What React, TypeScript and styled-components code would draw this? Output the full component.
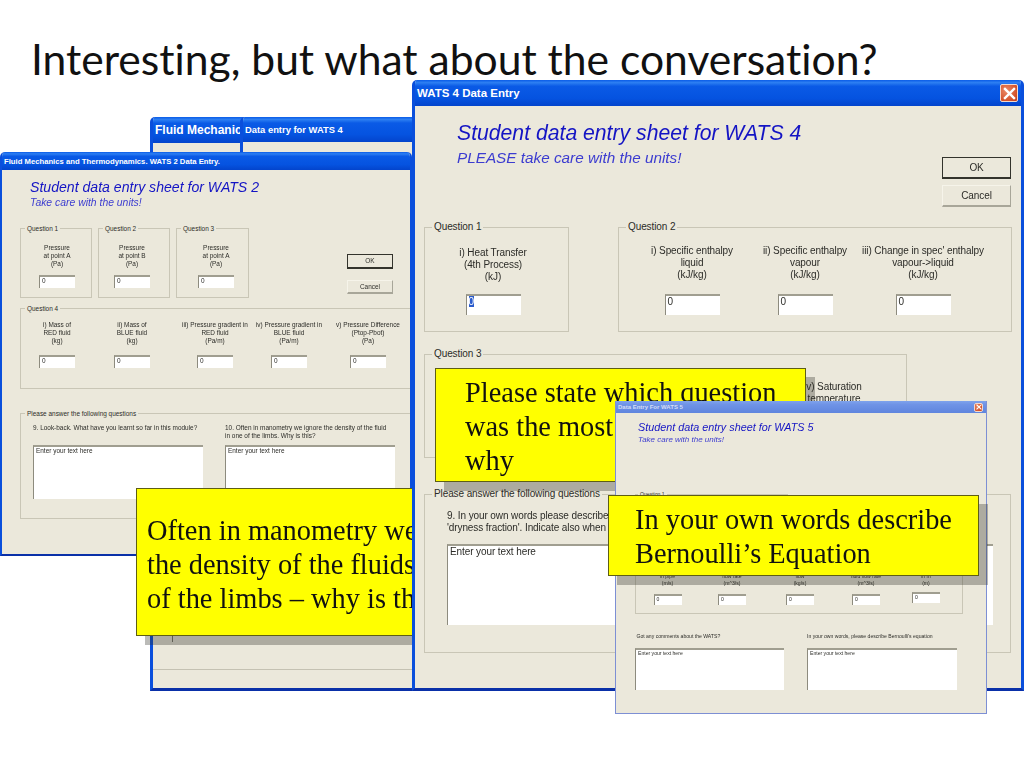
import React from 'react';
import styled, { createGlobalStyle } from 'styled-components';

const Global = createGlobalStyle`
    html, body {
        margin: 0;
        padding: 0;
        background: #fff;
    }
`;

const Slide = styled.div`
    position: relative;
    width: 1024px;
    height: 768px;
    overflow: hidden;
    background: #fff;
    font-family: 'Liberation Sans', Arial, sans-serif;
`;

const SlideTitle = styled.h1`
    margin: 0;
    padding: 35px 0 0 31px;
    font: 400 42.6px/48px Lato, 'Noto Sans', sans-serif;
    font-variant-ligatures: none;
    color: #111;
`;

const Window = styled.div<{ $x: number; $y: number; $w: number; $h: number; $edge?: number; $faded?: boolean }>`
    position: absolute;
    left: ${({ $x }) => $x}px;
    top: ${({ $y }) => $y}px;
    width: ${({ $w }) => $w}px;
    height: ${({ $h }) => $h}px;
    box-sizing: border-box;
    display: flex;
    flex-direction: column;
    overflow: hidden;
    background: #ebe8db;
    color: #2c2c28;
    border: ${({ $edge = 3 }) => $edge}px solid ${({ $faded }) => ($faded ? '#7d8fd4' : '#0a4fdc')};
    border-top: 0;
    border-bottom-color: ${({ $faded }) => ($faded ? '#7d8fd4' : '#0a30a8')};
    border-radius: ${({ $faded }) => ($faded ? '0' : '5px 5px 0 0')};
`;

const TitleBar = styled.div<{ $height: number; $size: number; $faded?: boolean }>`
    flex: none;
    display: flex;
    align-items: center;
    justify-content: space-between;
    height: ${({ $height }) => $height}px;
    margin: 0 -3px;
    padding: 0 6px 0 5px;
    background: ${({ $faded }) =>
        $faded
            ? 'linear-gradient(to bottom, #7fa3ec, #6f93e6 30%, #5f85de)'
            : 'linear-gradient(to bottom, #0a5ce8 0, #2d7ff2 10%, #0a5ae6 24%, #0553e0 70%, #0344cc 100%)'};
    color: ${({ $faded }) => ($faded ? '#d5def5' : '#fff')};
    font-size: ${({ $size }) => $size}px;
    font-weight: 700;
    white-space: nowrap;
`;

const CloseBox = styled.span<{ $size: number }>`
    flex: none;
    display: flex;
    align-items: center;
    justify-content: center;
    width: ${({ $size }) => $size}px;
    height: ${({ $size }) => $size}px;
    box-sizing: border-box;
    border: 1px solid #f2d8cc;
    border-radius: 2px;
    background: radial-gradient(circle at 35% 35%, #ea8a68, #d4522a 70%, #c04020);
`;

const Form = styled.div<{ $size: number; $line: number; $track?: number }>`
    flex: 1;
    display: flex;
    flex-direction: column;
    min-height: 0;
    font-size: ${({ $size }) => $size}px;
    line-height: ${({ $line }) => $line}px;
    letter-spacing: ${({ $track = 0 }) => $track}px;
    filter: blur(0.3px);
`;

const Head = styled.div<{ $height: number; $left: number; $top: number }>`
    flex: none;
    display: flex;
    justify-content: space-between;
    height: ${({ $height }) => $height}px;
    box-sizing: border-box;
    padding: ${({ $top }) => $top}px 0 0 ${({ $left }) => $left}px;
`;

const Heading = styled.div<{ $size: number; $line: number }>`
    font-size: ${({ $size }) => $size}px;
    line-height: ${({ $line }) => $line}px;
    font-style: italic;
    letter-spacing: 0;
    color: #1414c4;
    white-space: nowrap;
`;

const SubHeading = styled(Heading)`
    color: #3c3cd0;
`;

const Buttons = styled.div<{ $top: number; $gap: number; $right: number }>`
    flex: none;
    display: flex;
    flex-direction: column;
    gap: ${({ $gap }) => $gap}px;
    margin: ${({ $top }) => $top}px ${({ $right }) => $right}px 0 auto;
`;

const Button = styled.div<{ $w: number; $h: number; $main?: boolean }>`
    display: flex;
    align-items: center;
    justify-content: center;
    width: ${({ $w }) => $w}px;
    height: ${({ $h }) => $h}px;
    box-sizing: border-box;
    border: 1px solid ${({ $main }) => ($main ? '#33332c' : '#f6f4ea')};
    border-right-color: ${({ $main }) => ($main ? '#33332c' : '#a8a699')};
    border-bottom: 2px solid ${({ $main }) => ($main ? '#33332c' : '#a8a699')};
`;

const GroupRow = styled.div<{ $left: number; $gap?: number; $top?: number }>`
    flex: none;
    display: flex;
    align-items: flex-start;
    gap: ${({ $gap = 0 }) => $gap}px;
    margin: ${({ $top = 0 }) => $top}px 0 0 ${({ $left }) => $left}px;
`;

const Group = styled.div<{ $w: number; $h: number; $top: number; $left?: number; $cols?: string }>`
    position: relative;
    flex: none;
    display: grid;
    align-content: start;
    grid-template-columns: ${({ $cols = '1fr' }) => $cols};
    width: ${({ $w }) => $w}px;
    height: ${({ $h }) => $h}px;
    box-sizing: border-box;
    padding: ${({ $top }) => $top}px 0 0 ${({ $left = 0 }) => $left}px;
    border: 1px solid #c9c6b6;
`;

const Legend = styled.span<{ $left: number }>`
    position: absolute;
    left: ${({ $left }) => $left}px;
    top: 0;
    transform: translateY(-55%);
    padding: 0 2px;
    background: #ebe8db;
    white-space: nowrap;
`;

const Field = styled.div<{ $gap: number }>`
    display: flex;
    flex-direction: column;
    align-items: center;
    gap: ${({ $gap }) => $gap}px;
    min-width: 0;
    text-align: center;
    white-space: nowrap;
`;

const Entry = styled.div<{ $w: number; $h: number; $up?: number }>`
    width: ${({ $w }) => $w}px;
    height: ${({ $h }) => $h}px;
    box-sizing: border-box;
    margin-top: ${({ $up = 0 }) => -$up}px;
    padding: 0 0 0 2px;
    background: #fff;
    border-top: 2px solid #a09e90;
    border-left: 1px solid #8d8b7e;
    text-align: left;
    white-space: nowrap;
    overflow: hidden;
`;

const Picked = styled.span`
    background: #2b5ccc;
    color: #fff;
`;

const Question = styled.div<{ $gap: number }>`
    display: flex;
    flex-direction: column;
    gap: ${({ $gap }) => $gap}px;
    white-space: nowrap;
`;

const Rule = styled.div`
    flex: none;
    margin: auto -3px 18px;
    border-top: 1px solid #c4c1b2;
`;

const Tick = styled.div`
    flex: none;
    width: 1px;
    height: 8px;
    margin: 0 0 27px 19px;
    background: #77756a;
`;

const Spacer = styled.div`
    flex: 1;
`;

const Note = styled.div<{ $x: number; $y: number; $w: number; $h: number; $left: number; $top: number }>`
    position: absolute;
    left: ${({ $x }) => $x}px;
    top: ${({ $y }) => $y}px;
    width: ${({ $w }) => $w}px;
    height: ${({ $h }) => $h}px;
    box-sizing: border-box;
    padding: ${({ $top }) => $top}px 0 0 ${({ $left }) => $left}px;
    background: #ffff00;
    border: 1.5px solid #5e5e14;
    box-shadow: 9px 9px 0 rgba(50, 48, 40, 0.33);
    color: #111;
    font: 28.4px/34px 'Liberation Serif', 'Times New Roman', serif;
    white-space: nowrap;
`;

const CrossIcon = ({ size }: { size: number }) => (
    <svg width={size} height={size} viewBox="0 0 10 10">
        <path d="M1.5 1.5 L8.5 8.5 M8.5 1.5 L1.5 8.5" stroke="#fff" strokeWidth="1.8" strokeLinecap="square" />
    </svg>
);

const Lines = ({ lines }: { lines: string[] }) => (
    <div>
        {lines.map((line) => (
            <div key={line}>{line}</div>
        ))}
    </div>
);

const wats2Tops = [
    ['Pressure', 'at point A', '(Pa)'],
    ['Pressure', 'at point B', '(Pa)'],
    ['Pressure', 'at point A', '(Pa)'],
];

const wats2Fluid = [
    ['i) Mass of', 'RED fluid', '(kg)'],
    ['ii) Mass of', 'BLUE fluid', '(kg)'],
    ['iii) Pressure gradient in', 'RED fluid', '(Pa/m)'],
    ['iv) Pressure gradient in', 'BLUE fluid', '(Pa/m)'],
    ['v) Pressure Difference', '(Ptop-Pbot)', '(Pa)'],
];

const wats4Enthalpy = [
    ['i) Specific enthalpy', 'liquid', '(kJ/kg)'],
    ['ii) Specific enthalpy', 'vapour', '(kJ/kg)'],
    ["iii) Change in spec' enthalpy", 'vapour->liquid', '(kJ/kg)'],
];

const wats5Flow = [
    ['i) Velocity', 'in pipe', '(m/s)'],
    ['ii) Volume', 'flow rate', '(m^3/s)'],
    ['iii) Mass', 'flow', '(kg/s)'],
    ['iv) Volume', 'fluid flow rate', '(m^3/s)'],
    ['v) Head', 'in m', '(m)'],
];

const Wats2Window = () => (
    <Window $x={0} $y={152} $w={412} $h={404} $edge={2}>
        <TitleBar $height={18} $size={7.7}>
            Fluid Mechanics and Thermodynamics. WATS 2 Data Entry.
        </TitleBar>
        <Form $size={6.45} $line={8}>
            <Head $height={58} $left={28} $top={9}>
                <div>
                    <Heading $size={14.1} $line={16}>
                        Student data entry sheet for WATS 2
                    </Heading>
                    <SubHeading $size={10.4} $line={16}>
                        Take care with the units!
                    </SubHeading>
                </div>
            </Head>
            <GroupRow $left={18} $gap={6}>
                {wats2Tops.map((lines, i) => (
                    <Group key={i} $w={i === 2 ? 73 : 72} $h={70} $top={15} $cols={['72px', '66px', '78px'][i]}>
                        <Legend $left={4}>Question {i + 1}</Legend>
                        <Field $gap={7}>
                            <Lines lines={lines} />
                            <Entry $w={36} $h={13}>
                                0
                            </Entry>
                        </Field>
                    </Group>
                ))}
                <Buttons $top={26} $gap={11} $right={17}>
                    <Button $w={46} $h={15} $main>
                        OK
                    </Button>
                    <Button $w={46} $h={14}>
                        Cancel
                    </Button>
                </Buttons>
            </GroupRow>
            <GroupRow $left={18} $top={10}>
                <Group $w={420} $h={81} $top={12} $cols="72px 78px 88px 60px 98px">
                    <Legend $left={4}>Question 4</Legend>
                    {wats2Fluid.map((lines) => (
                        <Field key={lines[0]} $gap={10}>
                            <Lines lines={lines} />
                            <Entry $w={36} $h={13}>
                                0
                            </Entry>
                        </Field>
                    ))}
                </Group>
            </GroupRow>
            <GroupRow $left={18} $top={24}>
                <Group $w={420} $h={106} $top={10} $left={12} $cols="192px 192px">
                    <Legend $left={4}>Please answer the following questions</Legend>
                    <Question $gap={5}>
                        <Lines lines={['9. Look-back. What have you learnt so far in this module?', '\u00a0']} />
                        <Entry $w={170} $h={54}>Enter your text here</Entry>
                    </Question>
                    <Question $gap={5}>
                        <Lines
                            lines={['10. Often in manometry we ignore the density of the fluid', 'in one of the limbs. Why is this?']}
                        />
                        <Entry $w={170} $h={54}>Enter your text here</Entry>
                    </Question>
                </Group>
            </GroupRow>
        </Form>
    </Window>
);

const Wats4Window = () => (
    <Window $x={412} $y={80} $w={612} $h={611}>
        <TitleBar $height={26} $size={11.5}>
            WATS 4 Data Entry
            <CloseBox $size={18}>
                <CrossIcon size={13} />
            </CloseBox>
        </TitleBar>
        <Form $size={10} $line={12} $track={-0.1}>
            <Head $height={121} $left={42} $top={15}>
                <div>
                    <Heading $size={21.2} $line={24}>
                        Student data entry sheet for WATS 4
                    </Heading>
                    <SubHeading $size={15.3} $line={26}>
                        PLEASE take care with the units!
                    </SubHeading>
                </div>
                <Buttons $top={36} $gap={6} $right={10}>
                    <Button $w={69} $h={22} $main>
                        OK
                    </Button>
                    <Button $w={69} $h={22}>
                        Cancel
                    </Button>
                </Buttons>
            </Head>
            <GroupRow $left={9} $gap={49}>
                <Group $w={145} $h={105} $top={19} $left={18} $cols="100px">
                    <Legend $left={7}>Question 1</Legend>
                    <Field $gap={11}>
                        <Lines lines={['i) Heat Transfer', '(4th Process)', '(kJ)']} />
                        <Entry $w={55} $h={21}>
                            <Picked>0</Picked>
                        </Entry>
                    </Field>
                </Group>
                <Group $w={394} $h={105} $top={17} $left={15} $cols="116px 110px 126px">
                    <Legend $left={7}>Question 2</Legend>
                    {wats4Enthalpy.map((lines) => (
                        <Field key={lines[0]} $gap={13}>
                            <Lines lines={lines} />
                            <Entry $w={55} $h={21}>
                                0
                            </Entry>
                        </Field>
                    ))}
                </Group>
            </GroupRow>
            <GroupRow $left={9} $top={22}>
                <Group $w={483} $h={104} $top={26} $left={364} $cols="90px">
                    <Legend $left={7}>Question 3</Legend>
                    <Field $gap={14}>
                        <Lines lines={['v) Saturation', 'temperature', '(C)']} />
                        <Entry $w={55} $h={21}>
                            0
                        </Entry>
                    </Field>
                </Group>
            </GroupRow>
            <GroupRow $left={9} $top={36}>
                <Group $w={587} $h={159} $top={15} $left={22} $cols="288px 258px">
                    <Legend $left={7}>Please answer the following questions</Legend>
                    <Question $gap={10}>
                        <Lines lines={['9. In your own words please describe', "'dryness fraction'. Indicate also when"]} />
                        <Entry $w={253} $h={81}>Enter your text here</Entry>
                    </Question>
                    <Question $gap={10}>
                        <Lines lines={['\u00a0', '\u00a0']} />
                        <Entry $w={258} $h={81}>Enter your text here</Entry>
                    </Question>
                </Group>
            </GroupRow>
        </Form>
    </Window>
);

const Wats5Window = () => (
    <Window $x={615} $y={401} $w={372} $h={313} $edge={1} $faded>
        <TitleBar $height={12} $size={6} $faded>
            Data Entry For WATS 5
            <CloseBox $size={9}>
                <CrossIcon size={6} />
            </CloseBox>
        </TitleBar>
        <Form $size={5.1} $line={7}>
            <Head $height={81} $left={22} $top={7}>
                <div>
                    <Heading $size={10.8} $line={14}>
                        Student data entry sheet for WATS 5
                    </Heading>
                    <SubHeading $size={8} $line={12}>
                        Take care with the units!
                    </SubHeading>
                </div>
            </Head>
            <GroupRow $left={19}>
                <Group $w={153} $h={60} $top={8}>
                    <Legend $left={2}>Question 1</Legend>
                </Group>
            </GroupRow>
            <GroupRow $left={19} $top={6}>
                <Group $w={328} $h={54} $top={5} $cols="63px 66px 70px 62px 58px">
                    {wats5Flow.map((lines, i) => (
                        <Field key={lines[0]} $gap={7}>
                            <Lines lines={lines} />
                            <Entry $w={28} $h={11} $up={i === 4 ? 2 : 0}>
                                0
                            </Entry>
                        </Field>
                    ))}
                </Group>
            </GroupRow>
            <GroupRow $left={19} $top={19} $gap={23}>
                <Question $gap={8}>
                    <Lines lines={['\u00a0Got any comments about the WATS?']} />
                    <Entry $w={149} $h={42}>Enter your text here</Entry>
                </Question>
                <Question $gap={8}>
                    <Lines lines={["In your own words, please describe Bernoulli's equation"]} />
                    <Entry $w={150} $h={42}>Enter your text here</Entry>
                </Question>
            </GroupRow>
        </Form>
    </Window>
);

const App = () => (
    <Slide>
        <Global />
        <SlideTitle>Interesting, but what about the conversation?</SlideTitle>

        {/* back windows, only their edges show */}
        <Window $x={150} $y={117} $w={280} $h={574}>
            <TitleBar $height={26} $size={12}>
                Fluid Mechanics and Thermodynamics
            </TitleBar>
            <Spacer />
            <Tick />
            <Rule />
        </Window>
        <Window $x={240} $y={117} $w={190} $h={380}>
            <TitleBar $height={25} $size={9.4}>
                Data entry for WATS 4
            </TitleBar>
        </Window>
        <Wats2Window />

        <Note $x={136} $y={488} $w={340} $h={148} $left={10} $top={25}>
            Often in manometry we ignore
            <br />
            the density of the fluids in one
            <br />
            of the limbs – why is this?
        </Note>

        <Wats4Window />

        <Note $x={435} $y={368} $w={371} $h={114} $left={29} $top={7}>
            Please state which question
            <br />
            was the most difficult and
            <br />
            why
        </Note>

        <Wats5Window />

        <Note $x={608} $y={495} $w={371} $h={81} $left={26} $top={7}>
            In your own words describe
            <br />
            Bernoulli’s Equation
        </Note>
    </Slide>
);

export default App;
